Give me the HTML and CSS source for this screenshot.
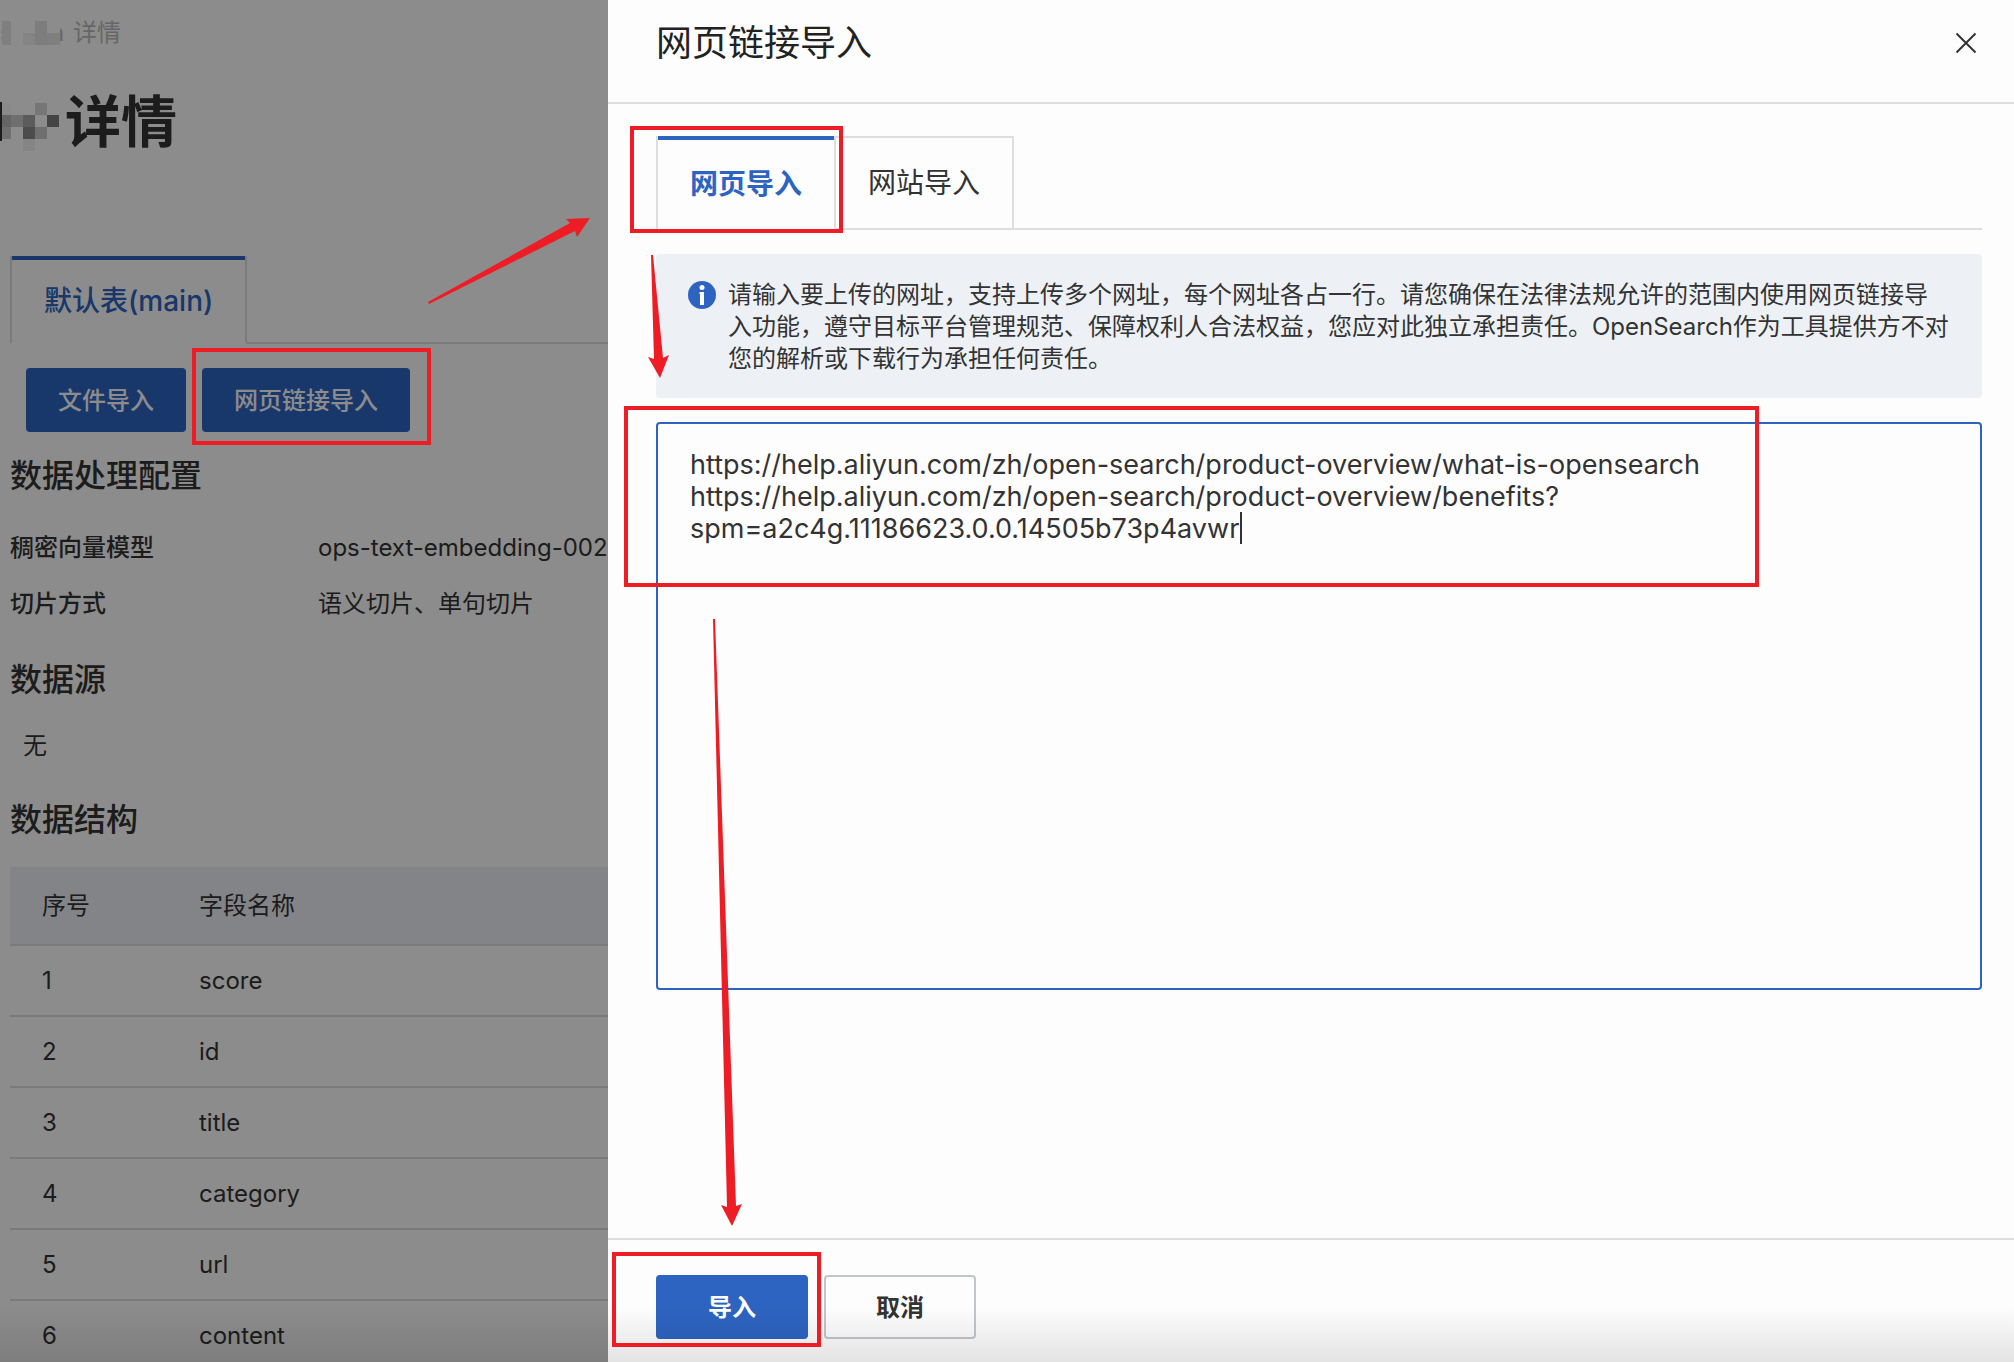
FILE: index.html
```html
<!DOCTYPE html>
<html lang="zh-CN">
<head>
<meta charset="utf-8">
<title>网页链接导入</title>
<link rel="stylesheet" href="styles.css">
</head>
<body>
<main class="page">
  <nav class="crumbs" aria-label="breadcrumb">
    <span class="crumb-head">s</span>
    <svg class="mosaic-small" viewBox="0 0 58 24" aria-hidden="true">
      <path fill="#e7e7e7" d="M0 0h9v24H0zM45 12h13v12H45z"/>
      <path fill="#f0f0f0" d="M21 12h12v12H21z"/>
      <path fill="#e3e3e3" d="M33 0h12v24H33z"/>
    </svg>
    <span class="crumb-tail">n</span>
    <span class="crumb-current">详情</span>
  </nav>
  <h1 class="page-title">
    <svg class="mosaic-large" viewBox="0 0 60 60" aria-hidden="true">
      <path fill="#333" d="M0 10h2v39H0z"/>
      <path fill="#fafafa" d="M2 11h9v12H2z"/>
      <path fill="#d8d8d8" d="M35 11h12v12H35z"/>
      <path fill="#b9b9b9" d="M2 23h9v12H2z"/>
      <path fill="#cbcbcb" d="M11 23h12v12H11zM2 35h9v12H2zM35 35h12v12H35z"/>
      <path fill="#a7a7a7" d="M23 23h12v12H23z"/>
      <path fill="#7c7c7c" d="M47 23h12v12H47z"/>
      <path fill="#8a8a8a" d="M23 35h12v12H23z"/>
      <path fill="#f3f3f3" d="M23 47h12v12H23z"/>
    </svg>
    <span>详情</span>
  </h1>

  <div class="tabs page-tabs" role="tablist">
    <button class="tab tab-active" role="tab" aria-selected="true">默认表(main)</button>
  </div>

  <div class="actions">
    <button class="btn btn-primary">文件导入</button>
    <button class="btn btn-primary">网页链接导入</button>
  </div>

  <h2 class="section-title">数据处理配置</h2>
  <dl class="props">
    <dt>稠密向量模型</dt><dd>ops-text-embedding-002</dd>
    <dt>切片方式</dt><dd>语义切片、单句切片</dd>
  </dl>

  <h2 class="section-title">数据源</h2>
  <p class="empty">无</p>

  <h2 class="section-title">数据结构</h2>
  <table class="fields">
    <thead><tr><th class="col-index">序号</th><th>字段名称</th></tr></thead>
    <tbody>
      <tr><td>1</td><td>score</td></tr>
      <tr><td>2</td><td>id</td></tr>
      <tr><td>3</td><td>title</td></tr>
      <tr><td>4</td><td>category</td></tr>
      <tr><td>5</td><td>url</td></tr>
      <tr><td>6</td><td>content</td></tr>
    </tbody>
  </table>
</main>

<div class="mask"></div>

<aside class="drawer" role="dialog" aria-labelledby="drawer-title">
  <header class="drawer-header">
    <h2 class="drawer-title" id="drawer-title">网页链接导入</h2>
    <button class="close" aria-label="关闭">
      <svg viewBox="0 0 20 20" aria-hidden="true"><path d="M0.500 0.500l19 19M19.500 0.500l-19 19" fill="none" stroke="#333" stroke-width="2"/></svg>
    </button>
  </header>

  <div class="drawer-body">
    <div class="tabs" role="tablist">
      <button class="tab tab-active" role="tab" aria-selected="true">网页导入</button>
      <button class="tab" role="tab" aria-selected="false">网站导入</button>
    </div>

    <div class="notice">
      <svg class="notice-icon" viewBox="0 0 28 28" aria-hidden="true">
        <circle cx="14" cy="14" r="14" fill="#2d64c1"/>
        <circle cx="14" cy="6.500" r="2.500" fill="#fff"/>
        <path d="M11.500 11h4.500v13h-4v-11h-.5z" fill="#fff"/>
      </svg>
      <p class="notice-text">请输入要上传的网址，支持上传多个网址，每个网址各占一行。请您确保在法律法规允许的范围内使用网页链接导入功能，遵守目标平台管理规范、保障权利人合法权益，您应对此独立承担责任。OpenSearch作为工具提供方不对您的解析或下载行为承担任何责任。</p>
    </div>

    <div class="field">
      <textarea class="urls" aria-label="网址" spellcheck="false">https://help.aliyun.com/zh/open-search/product-overview/what-is-opensearch
https://help.aliyun.com/zh/open-search/product-overview/benefits?spm=a2c4g.11186623.0.0.14505b73p4avwr</textarea>
      <span class="caret"></span>
    </div>
  </div>

  <footer class="drawer-footer">
    <button class="btn btn-primary btn-wide">导入</button>
    <button class="btn btn-wide">取消</button>
  </footer>
</aside>

<div class="edge-shade"></div>

<svg class="marks" aria-hidden="true">
  <g fill="none" stroke="#ee1c24" stroke-width="4">
    <rect x="194" y="350" width="235" height="93"/>
    <rect x="632" y="128" width="209" height="103"/>
    <rect x="626" y="408" width="1131" height="177"/>
    <rect x="614" y="1254" width="205" height="91"/>
  </g>
  <g fill="#ee1c24">
    <path d="M428 302L570 223L566 219L590 218L577 237L575 231L429 304Z"/>
    <path d="M651 255L654 359L648 357L660 378L669 355L663 358L653 255Z"/>
    <path d="M713 619L727 1207L721 1205L732 1226L742 1204L736 1206L715 619Z"/>
  </g>
</svg>
</body>
</html>
```
FILE: styles.css
```css
* { box-sizing: border-box; }

body {
  margin: 0;
  height: 100vh;
  overflow: hidden;
  position: relative;
  background: #fff;
  color: #333;
  font-family: Inter, "Noto Sans CJK SC", sans-serif;
  font-size: 24px;
  line-height: 32px;
}

h1, h2, p, dl, dd { margin: 0; }

button {
  font: inherit;
  color: inherit;
  cursor: pointer;
}

/* detail page */
.page { padding: 17px 0 0 10px; }

.crumbs {
  display: flex;
  align-items: center;
  height: 32px;
  margin-left: -10px;
  color: #bbb;
}
.crumb-head { width: 12px; }
/* the mosaic hides most of the instance name on both of its sides */
.mosaic-small {
  position: relative;
  width: 58px;
  height: 24px;
  margin: 0 -10px;
  background: #fff;
}
.crumb-tail { width: 14px; }
.crumb-current { margin-left: 9px; }

.page-title {
  display: flex;
  align-items: center;
  height: 80px;
  margin: 33px 0 0 -10px;
  color: #333;
  font-size: 56px;
  font-weight: 600;
}
.mosaic-large { width: 60px; height: 60px; margin-right: 5px; }

.tabs {
  display: flex;
  border-bottom: 2px solid #dedede;
}
.tab {
  height: 94px;
  margin-bottom: -2px;
  padding: 0 32px;
  background: #fff;
  border: 2px solid #dedede;
  border-left: 0;
  font-size: 28px;
}
.tab:first-child { border-left: 2px solid #dedede; }
.page .tab-active,
.drawer .tab-active {
  padding-top: 4px;
  background: linear-gradient(#2d64c1 4px, transparent 4px) padding-box, #fff;
  border-top: 0;
  border-bottom-color: #fff;
  color: #2d64c1;
  font-weight: 600;
}
.page-tabs { margin-top: 94px; }
.page .page-tabs .tab { height: 88px; font-weight: 500; }

.actions {
  display: flex;
  gap: 16px;
  padding: 24px 16px;
}

.btn {
  height: 64px;
  padding: 2px 30px 0;
  background: transparent;
  border: 2px solid #c0c6cc;
  border-radius: 4px;
  font-weight: 500;
}
.btn-primary {
  background: #2d64c1;
  border-color: #2d64c1;
  color: #fff;
}
.btn-wide { width: 152px; }

.section-title {
  height: 40px;
  font-size: 32px;
  line-height: 40px;
  font-weight: 500;
}

.props {
  display: grid;
  grid-template-columns: 308px 1fr;
  row-gap: 24px;
  margin: 36px 0 40px;
}
.props dt { font-weight: 500; }

.empty { padding: 30px 13px 38px; }

.fields {
  width: 100%;
  margin-top: 27px;
  border-collapse: collapse;
}
.fields th, .fields td {
  height: 71px;
  padding: 0 32px;
  border-bottom: 2px solid #dedede;
  text-align: left;
  font-weight: 400;
}
.fields th { height: 78px; background: #eff1f7; }
.fields .col-index { width: 157px; }

.mask {
  position: absolute;
  inset: 0;
  background: rgba(0, 0, 0, .45);
}

/* drawer */
.drawer {
  position: absolute;
  top: 0;
  right: 0;
  bottom: 0;
  left: 608px;
  display: flex;
  flex-direction: column;
  background: #fdfdfd;
}
.drawer-header {
  display: flex;
  justify-content: space-between;
  align-items: center;
  height: 104px;
  padding: 0 38px 16px 48px;
  border-bottom: 2px solid #dedede;
}
.drawer-title {
  font-size: 36px;
  font-weight: 400;
  color: #222;
}
.close {
  padding: 0;
  background: none;
  border: 0;
}
.close svg { display: block; width: 20px; height: 20px; overflow: visible; }

.drawer-body {
  flex: 1;
  padding: 32px 32px 0 48px;
}
.drawer .tab { background-color: #fdfdfd; }
.drawer .tab-active { border-bottom-color: #fdfdfd; }

.notice {
  display: flex;
  gap: 12px;
  margin: 24px 0;
  padding: 25px 32px 23px;
  background: #edf1f6;
  border-radius: 4px;
}
.notice-icon { flex: none; width: 28px; height: 28px; margin-top: 2px; }

.field { position: relative; }
.urls {
  display: block;
  width: 100%;
  height: 568px;
  padding: 25px 32px;
  background: transparent;
  border: 2px solid #2d64c1;
  border-radius: 4px;
  outline: 0;
  resize: none;
  color: #333;
  font-family: inherit;
  font-size: 27px;
  line-height: 32px;
}
.caret {
  position: absolute;
  top: 90px;
  left: 584px;
  width: 2px;
  height: 32px;
  background: #333;
}

.drawer-footer {
  display: flex;
  gap: 16px;
  padding: 35px 48px 23px;
  border-top: 2px solid #dedede;
}
.drawer-footer .btn { font-weight: 600; }

.edge-shade {
  position: absolute;
  right: 0;
  bottom: 0;
  left: 0;
  height: 56px;
  background: linear-gradient(rgba(0, 0, 0, 0), rgba(0, 0, 0, .1));
  pointer-events: none;
}

/* callout boxes and arrows */
.marks {
  position: absolute;
  top: 0;
  left: 0;
  width: 100%;
  height: 100%;
  pointer-events: none;
}
```
